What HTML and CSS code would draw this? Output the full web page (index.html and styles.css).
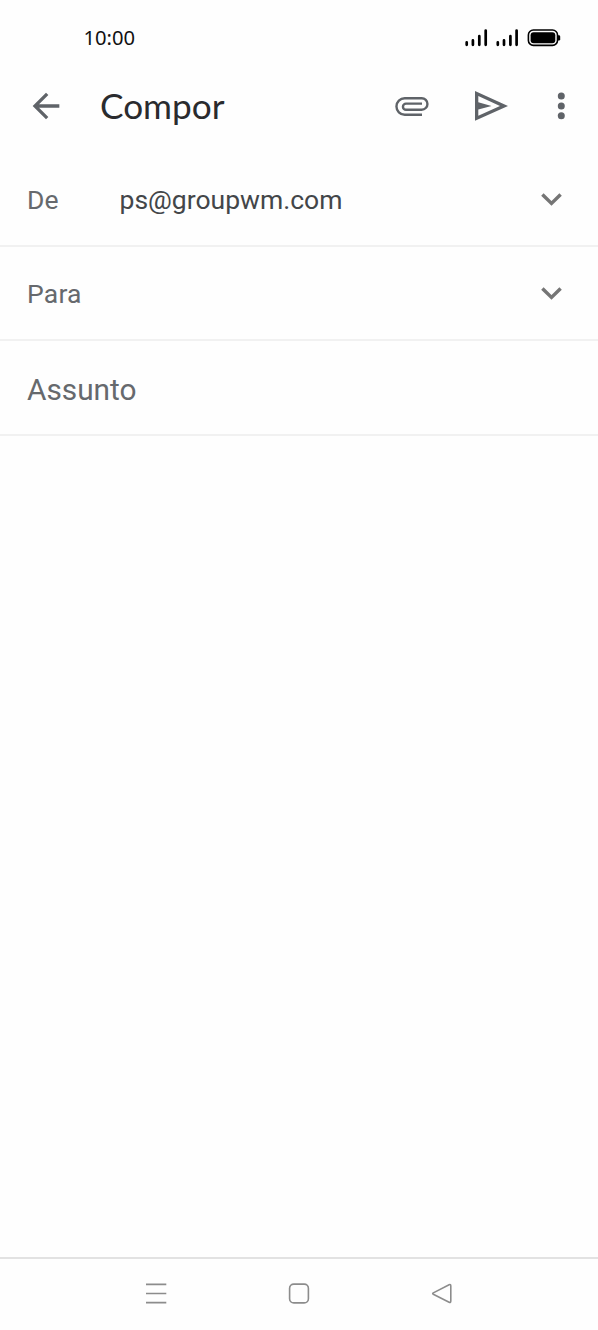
FILE: index.html
```html
<!DOCTYPE html>
<html lang="pt">
<head>
<meta charset="utf-8">
<title>Compor</title>
<link rel="stylesheet" href="styles.css">
</head>
<body>
<div class="screen">
  <div class="status">
    <span class="time">10:00</span>
    <svg class="indicators" width="98" height="20" viewBox="464 28 98 20">
      <g stroke="#000" stroke-width="2.7" stroke-linecap="round">
        <path d="M466.7 42.4v2.4M472.9 40.4v4.4M479.3 36.2v8.6M485.7 30.6v14.2"/>
        <path d="M497.8 42.4v2.4M504 40.4v4.4M510.4 36.2v8.6M516.6 30.6v14.2"/>
      </g>
      <rect x="528.4" y="30" width="29.1" height="15.4" rx="5" fill="none" stroke="#000" stroke-width="1.6"/>
      <rect x="530.6" y="32.2" width="24.7" height="11" rx="3" fill="#000"/>
      <path d="M558 35.2h.9q1.3 0 1.3 1.2v2.8q0 1.2-1.3 1.2h-.9z" fill="#000"/>
    </svg>
  </div>
  <header class="toolbar">
    <svg class="back" width="40" height="40" viewBox="0 0 24 24" fill="#5f6368"><path d="M20 11H7.83l5.59-5.59L12 4l-8 8 8 8 1.41-1.41L7.83 13H20z"/></svg>
    <h1 class="title">Compor</h1>
    <svg class="attach" width="36" height="22" viewBox="394 95 36 22" fill="none" stroke="#5f6368" stroke-width="2.4"><path d="M422 114.7H404.7a8.25 8.25 0 0 1 0-16.5H421.7a5.75 5.75 0 0 1 0 11.5H406a3.05 3.05 0 0 1 0-6.1H422"/></svg>
    <svg class="send" width="34" height="32" viewBox="474 90 34 32" fill="#5f6368" fill-rule="evenodd"><path d="M475 91L508 106L475 120.8ZM478.3 96V102.2L491.5 106L478.3 109.6V115.7L500 106Z"/></svg>
    <svg class="more" width="8" height="28" viewBox="0 0 8 28" fill="#5f6368"><circle cx="4.3" cy="4" r="3.5"/><circle cx="4.3" cy="14" r="3.5"/><circle cx="4.3" cy="23.8" r="3.5"/></svg>
  </header>
  <div class="row from">
    <span class="label">De</span>
    <span class="value">ps@groupwm.com</span>
    <svg class="chevron" width="22" height="14" viewBox="0 0 22 14"><path d="M2.4 2.6L11.5 11.4L20.6 2.6"/></svg>
  </div>
  <div class="row to">
    <span class="label">Para</span>
    <svg class="chevron" width="22" height="14" viewBox="0 0 22 14"><path d="M2.4 2.6L11.5 11.4L20.6 2.6"/></svg>
  </div>
  <div class="row subject"><span class="hint">Assunto</span></div>
  <main class="body"></main>
  <nav class="nav">
    <svg width="24" height="24" viewBox="0 0 24 24"><path d="M2 3.4h20.3M2 12.5h20.3M2 21.6h20.3"/></svg>
    <svg width="24" height="24" viewBox="0 0 24 24"><rect x="2.6" y="3.1" width="18.8" height="18.8" rx="4.2"/></svg>
    <svg width="24" height="24" viewBox="0 0 24 24"><path d="M3.3 11.9L19.1 3.7Q20.8 3 20.8 4.9V20.1Q20.8 21.9 19.1 21.2L3.3 13.2Q2.1 12.5 3.3 11.9Z"/></svg>
  </nav>
</div>
</body>
</html>
```
FILE: styles.css
```css
* { box-sizing: border-box; }
body { margin: 0; background: #fefefe; font-family: Roboto, sans-serif; }
.screen { display: flex; flex-direction: column; width: 598px; height: 1330px; }
.status { display: flex; align-items: center; height: 76px; padding: 0 36px 0 83.5px; }
.time { margin-bottom: 2px; font: 20.2px/24px "Noto Sans", sans-serif; color: #111; }
.indicators { margin-left: auto; }
.toolbar { display: flex; align-items: center; height: 60px; padding: 0 33px 0 26px; }
.title { margin: 0 0 2px 34px; font: 400 35.2px/44px Lato, sans-serif; color: #2a2b2e; }
.attach { margin-left: auto; }
.send { margin-left: 44px; }
.more { margin-left: 49px; }
.row { display: flex; align-items: center; border-bottom: 2px solid #f1f1f1; padding: 0 36px 0 27px; color: #66696d; font-size: 26.5px; flex: none; }
.from { height: 111px; padding-top: 17px; }
.to { height: 94px; }
.subject { height: 95px; font-size: 29.8px; padding-top: 3px; }
.label { width: 92.5px; }
.to .label { letter-spacing: 0.2px; }
.value { color: #434649; }
.chevron { margin-left: auto; fill: none; stroke: #757575; stroke-width: 3.5; }
.body { flex: 1; }
.nav { display: flex; justify-content: center; gap: 119px; height: 73px; padding-top: 22px; border-top: 2px solid #e2e2e2; }
.nav svg { fill: none; stroke: #8c8c8c; stroke-width: 1.6; }
```
